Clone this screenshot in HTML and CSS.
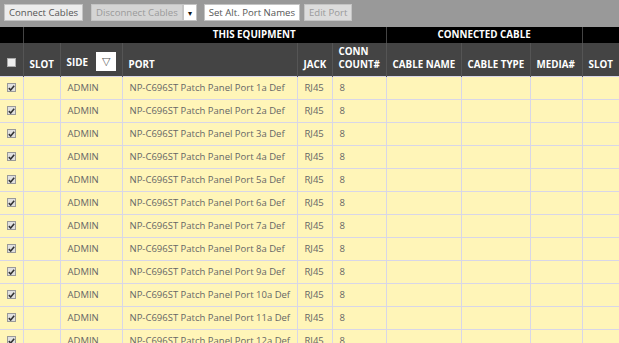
FILE: index.html
```html
<!DOCTYPE html>
<html lang="en">
<head>
    <meta charset="UTF-8">
    <title>Ports</title>
    <link rel="stylesheet" href="styles.css">
</head>
<body>

<div class="toolbar">
    <button class="btn">Connect Cables</button>
    <div class="split">
        <button class="btn disabled">Disconnect Cables</button>
        <button class="btn caret">&#9662;</button>
    </div>
    <button class="btn white">Set Alt. Port Names</button>
    <button class="btn disabled edit">Edit Port</button>
</div>

<table class="grid">
    <colgroup>
        <col style="width:23px">
        <col style="width:37px">
        <col style="width:62px">
        <col style="width:175px">
        <col style="width:35px">
        <col style="width:54px">
        <col style="width:75px">
        <col style="width:69px">
        <col style="width:52px">
        <col style="width:40px">
    </colgroup>
    <thead>
        <tr class="group">
            <th></th>
            <th colspan="5" class="equip">THIS EQUIPMENT</th>
            <th colspan="3" class="center">CONNECTED CABLE</th>
            <th></th>
        </tr>
        <tr class="heads">
            <th class="chk"><span class="box"></span></th>
            <th>SLOT</th>
            <th class="side">SIDE <span class="filter">&#9661;</span></th>
            <th>PORT</th>
            <th>JACK</th>
            <th>CONN<br>COUNT#</th>
            <th>CABLE NAME</th>
            <th>CABLE TYPE</th>
            <th>MEDIA#</th>
            <th>SLOT</th>
        </tr>
    </thead>
    <tbody id="rows"></tbody>
</table>

<script>
    const rows = document.getElementById('rows');
    const ports = ['1a', '2a', '3a', '4a', '5a', '6a', '7a', '8a', '9a', '10a', '11a', '12a'];
    const check = '<svg width="7" height="6" viewBox="0 0 7 6"><path d="M0.8 3.2 L2.7 5 L6.2 0.8" fill="none" stroke="#333" stroke-width="1.6"/></svg>';

    ports.forEach(p => {
        const tr = document.createElement('tr');
        tr.innerHTML =
            '<td class="chk"><span class="box on">' + check + '</span></td>' +
            '<td></td>' +
            '<td>ADMIN</td>' +
            '<td>NP-C696ST Patch Panel Port ' + p + ' Def</td>' +
            '<td>RJ45</td>' +
            '<td>8</td>' +
            '<td></td><td></td><td></td><td></td>';
        rows.appendChild(tr);
    });
</script>

</body>
</html>
```

FILE: styles.css
```css
body {
    margin: 0;
    font-family: 'Open Sans', Arial, sans-serif;
    font-size: 9.5px;
    color: #666;
    background-color: #fff5b8;
    overflow: hidden;
}

.toolbar {
    height: 27px;
    background-color: #999;
    display: flex;
    align-items: flex-start;
    padding: 4px 0 0 4px;
    box-sizing: border-box;
}

.btn {
    font-family: inherit;
    font-size: 9.6px;
    height: 17px;
    padding: 0 4px;
    border: 1px solid #c4c4c4;
    background-color: #ececec;
    color: #555;
    margin: 0;
    line-height: 15px;
}

.toolbar > .btn:first-child {
    margin-right: 8px;
}

.split {
    display: flex;
    margin-right: 7px;
}

.disabled {
    background-color: #d4d4d4;
    color: #9a9a9a;
}

.caret {
    width: 14px;
    padding: 0;
    background-color: #fff;
    color: #111;
    font-size: 8px;
}

.white {
    background-color: #fff;
    margin-right: 4px;
}

.edit {
    background-color: #dcdcdc;
}

.grid {
    border-collapse: collapse;
    table-layout: fixed;
    width: 622px;
}

.grid th {
    color: #fff;
    font-weight: bold;
    text-align: left;
    font-size: 9.8px;
    padding: 0 6px;
    white-space: nowrap;
}

.group th {
    background-color: #000;
    height: 16px;
    padding: 0;
    border-left: 1px solid #444;
    line-height: 14px;
}

.group th:first-child {
    border-left: none;
}

.group .equip {
    text-align: right;
    padding-right: 90px;
}

.group .center {
    text-align: center;
}

.heads th {
    background-color: #444;
    height: 33px;
    box-sizing: border-box;
    vertical-align: bottom;
    padding-bottom: 5px;
    line-height: 13px;
    border-left: 1px solid #555;
}

.heads th:first-child {
    border-left: none;
}

.grid td {
    height: 22px;
    padding: 0 7px;
    border: 1px solid #d8d6e8;
    white-space: nowrap;
    overflow: hidden;
    line-height: 20px;
}

.grid .chk {
    padding: 0;
    text-align: center;
    border-left: none;
}

.heads .chk {
    vertical-align: bottom;
    padding-bottom: 7px;
}

.box {
    display: inline-block;
    width: 9px;
    height: 9px;
    box-sizing: border-box;
    border: 1px solid #aaa;
    background-color: #eee;
    vertical-align: middle;
    position: relative;
}

.box.on {
    background-color: #e0e0e0;
    border-color: #999;
}

.box svg {
    position: absolute;
    left: 0;
    top: 0.5px;
}

.side .filter {
    display: inline-block;
    width: 20px;
    height: 19px;
    background-color: #fff;
    color: #555;
    font-size: 11px;
    font-weight: normal;
    text-align: center;
    line-height: 18px;
    margin-left: 6px;
    vertical-align: 1px;
}
```
